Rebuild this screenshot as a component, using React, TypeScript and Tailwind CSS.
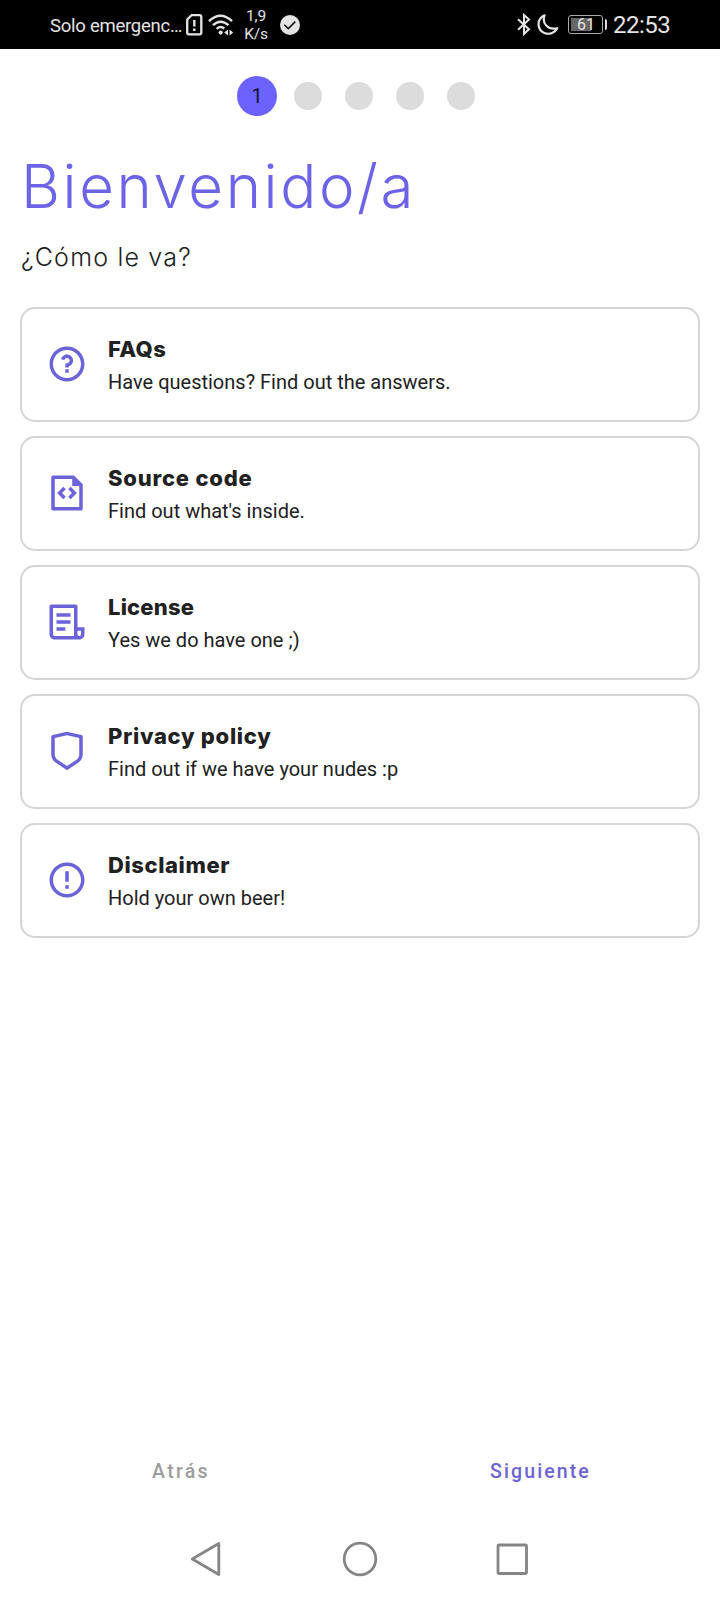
import React from 'react';
import {
  RiErrorWarningLine,
  RiFileCodeLine,
  RiFileList3Line,
  RiQuestionLine,
  RiShieldLine
} from 'react-icons/ri';

// Info cards on the welcome step
const cards = [
  { id: 'faqs', title: 'FAQs', description: 'Have questions? Find out the answers.', icon: RiQuestionLine, tracking: 'tracking-[0.4px]' },
  { id: 'source', title: 'Source code', description: "Find out what's inside.", icon: RiFileCodeLine, tracking: 'tracking-[0.8px]' },
  { id: 'license', title: 'License', description: 'Yes we do have one ;)', icon: RiFileList3Line, tracking: 'tracking-[0.2px]' },
  { id: 'privacy', title: 'Privacy policy', description: 'Find out if we have your nudes :p', icon: RiShieldLine, tracking: 'tracking-[0.7px]' },
  { id: 'disclaimer', title: 'Disclaimer', description: 'Hold your own beer!', icon: RiErrorWarningLine, tracking: 'tracking-[0.6px]' }
];

const steps = [1, 2, 3, 4, 5];

const StatusBar = () => (
  <div className="flex h-[49px] shrink-0 items-center bg-black pl-[50px] pr-[49px] text-[#e4e4e4]">
    <span className="w-[133px] whitespace-nowrap pt-[3px] text-[18.5px] leading-[24px] tracking-[-0.25px]">Solo emergenc…</span>

    {/* SIM alert */}
    <svg className="ml-[3px] h-[22px] w-[17px] shrink-0" viewBox="0 0 17 22" fill="none" stroke="currentColor">
      <path d="M5.5 1.2H13.5Q15.3 1.2 15.3 3V18.5Q15.3 20.3 13.5 20.3H3Q1.2 20.3 1.2 18.5V5.5Z" strokeWidth="2.3" strokeLinejoin="round" />
      <path d="M8.3 6V12.5M8.3 14.5V17" strokeWidth="2.4" />
    </svg>

    {/* Wi-Fi */}
    <svg className="ml-[5px] h-[22px] w-[26px] shrink-0" viewBox="0 0 26 22" fill="none" stroke="currentColor">
      <path d="M1 7.2Q12.5 -3.6 24 7.2M5 11.2Q12.5 4.2 20.5 11.2M8.7 14.8Q12.5 11.3 16.3 14.5" strokeWidth="2.4" />
      <circle cx="12.7" cy="18.6" r="2.1" fill="currentColor" stroke="none" />
      <path d="M20 15.5V21.5L16.2 18.5ZM21.5 15.5V21.5L25.2 18.5Z" fill="currentColor" stroke="none" />
    </svg>

    <div className="ml-[8px] w-[28px] text-center text-[15.5px] leading-[18px] tracking-[-0.2px]">
      <div>1,9</div>
      <div>K/s</div>
    </div>

    <svg className="ml-[9.5px] h-[20px] w-[20px] shrink-0" viewBox="0 0 20 20" fill="none">
      <circle cx="10" cy="10" r="10" fill="currentColor" />
      <path d="M4.3 9.8L8.3 13.6L15.3 6.6" stroke="#111" strokeWidth="1.5" />
    </svg>

    {/* Bluetooth */}
    <svg className="ml-auto h-[23px] w-[14px] shrink-0" viewBox="0 0 14 23" fill="none" stroke="currentColor" strokeWidth="2">
      <path d="M1 6.3L12 16.2L7 21V2L12 6.5L1 16.7" />
    </svg>
    <svg className="ml-[6px] h-[21px] w-[22px] shrink-0" viewBox="0 0 22 21" fill="none" stroke="currentColor">
      <path d="M7.5 1.3C-1 5.5 0 16.5 8 19.2C13 20.8 18 18.5 20.3 14.2C11.5 16.2 4.5 10 7.5 1.3Z" strokeWidth="2.2" strokeLinejoin="round" />
    </svg>
    <div className="ml-[9px] flex h-[19px] w-[35px] items-center rounded-[3px] border border-[#aaa] p-[2px]">
      <div className="flex h-full w-[20px] items-center bg-[#666] pl-[6px] text-[16px] leading-[16px]">61</div>
    </div>
    <div className="ml-[2px] h-[11px] w-[2px] rounded-r-sm bg-[#ddd]" />
    <span className="ml-[6px] w-[58px] whitespace-nowrap pt-px text-[24px] leading-[28px] tracking-[-0.5px]">22:53</span>
  </div>
);

const Stepper = () => (
  <div className="flex h-[40px] items-center justify-center pr-[2px]">
    {steps.map((step) => (
      <div key={step} className="flex w-[51px] justify-center">
        {step === 1 ? (
          <div className="flex h-[40px] w-[40px] items-center justify-center rounded-full bg-[#6c63ff] text-[20px] text-[#15133a]">
            {step}
          </div>
        ) : (
          <div className="h-[28px] w-[28px] rounded-full bg-[#dcdcdc]" />
        )}
      </div>
    ))}
  </div>
);

const InfoCard = ({ card }: { card: (typeof cards)[number] }) => {
  const Icon = card.icon;

  return (
    <div className="flex h-[115px] items-center rounded-[15px] border-2 border-[#d5d5d5] pl-[24px]">
      <Icon className="mb-px h-[42px] w-[42px] shrink-0 text-[#6c63d8]" />
      <div className="ml-[20px] whitespace-nowrap pt-px text-[#212121]">
        <h2 className={`font-['Inter',sans-serif] text-[22px] font-extrabold leading-[32px] ${card.tracking}`}>{card.title}</h2>
        <p className="mt-px text-[20px] leading-[32px]">{card.description}</p>
      </div>
    </div>
  );
};

const NavigationBar = () => (
  <div className="flex h-[82px] items-center justify-center gap-[118px] text-[#858585]">
    <svg className="h-[36px] w-[34px]" viewBox="0 0 34 36" fill="none" stroke="currentColor" strokeWidth="2.8" strokeLinejoin="round">
      <path d="M28.8 2.5V33.5L2.3 18Z" />
    </svg>
    <svg className="h-[36px] w-[36px]" viewBox="0 0 36 36" fill="none" stroke="currentColor" strokeWidth="2.8">
      <circle cx="18" cy="18" r="15.8" />
    </svg>
    <svg className="h-[36px] w-[34px]" viewBox="0 0 34 36" fill="none" stroke="currentColor" strokeWidth="2.8">
      <rect x="2" y="4" width="28.5" height="28.5" rx="1" />
    </svg>
  </div>
);

export default function App() {
  return (
    <div className="flex h-[1600px] w-[720px] flex-col overflow-hidden bg-white font-['Roboto',sans-serif]">
      <StatusBar />

      <main className="flex-1 px-[20px] pt-[27px]">
        <Stepper />
        <h1 className="mt-[30px] whitespace-nowrap pl-px font-['Inter',sans-serif] text-[60px] font-[350] leading-[80px] tracking-[2.6px] text-[#6c63e6]">
          Bienvenido/a
        </h1>
        <p className="mt-[11px] whitespace-nowrap pl-px font-['Inter',sans-serif] text-[25px] font-light leading-[40px] tracking-[1.2px] text-[#212121]">
          ¿Cómo le va?
        </p>
        <div className="mt-[30px] flex flex-col gap-[14px]">
          {cards.map((card) => (
            <InfoCard key={card.id} card={card} />
          ))}
        </div>
      </main>

      {/* Wizard actions */}
      <div className="grid h-[93px] grid-cols-2 items-center text-center text-[19.5px] font-medium">
        <button className="pl-[2px] tracking-[2.3px] text-[#9c9c9c]">Atrás</button>
        <button className="pl-px tracking-[2.1px] text-[#6c63cf]">Siguiente</button>
      </div>

      <NavigationBar />
    </div>
  );
}
